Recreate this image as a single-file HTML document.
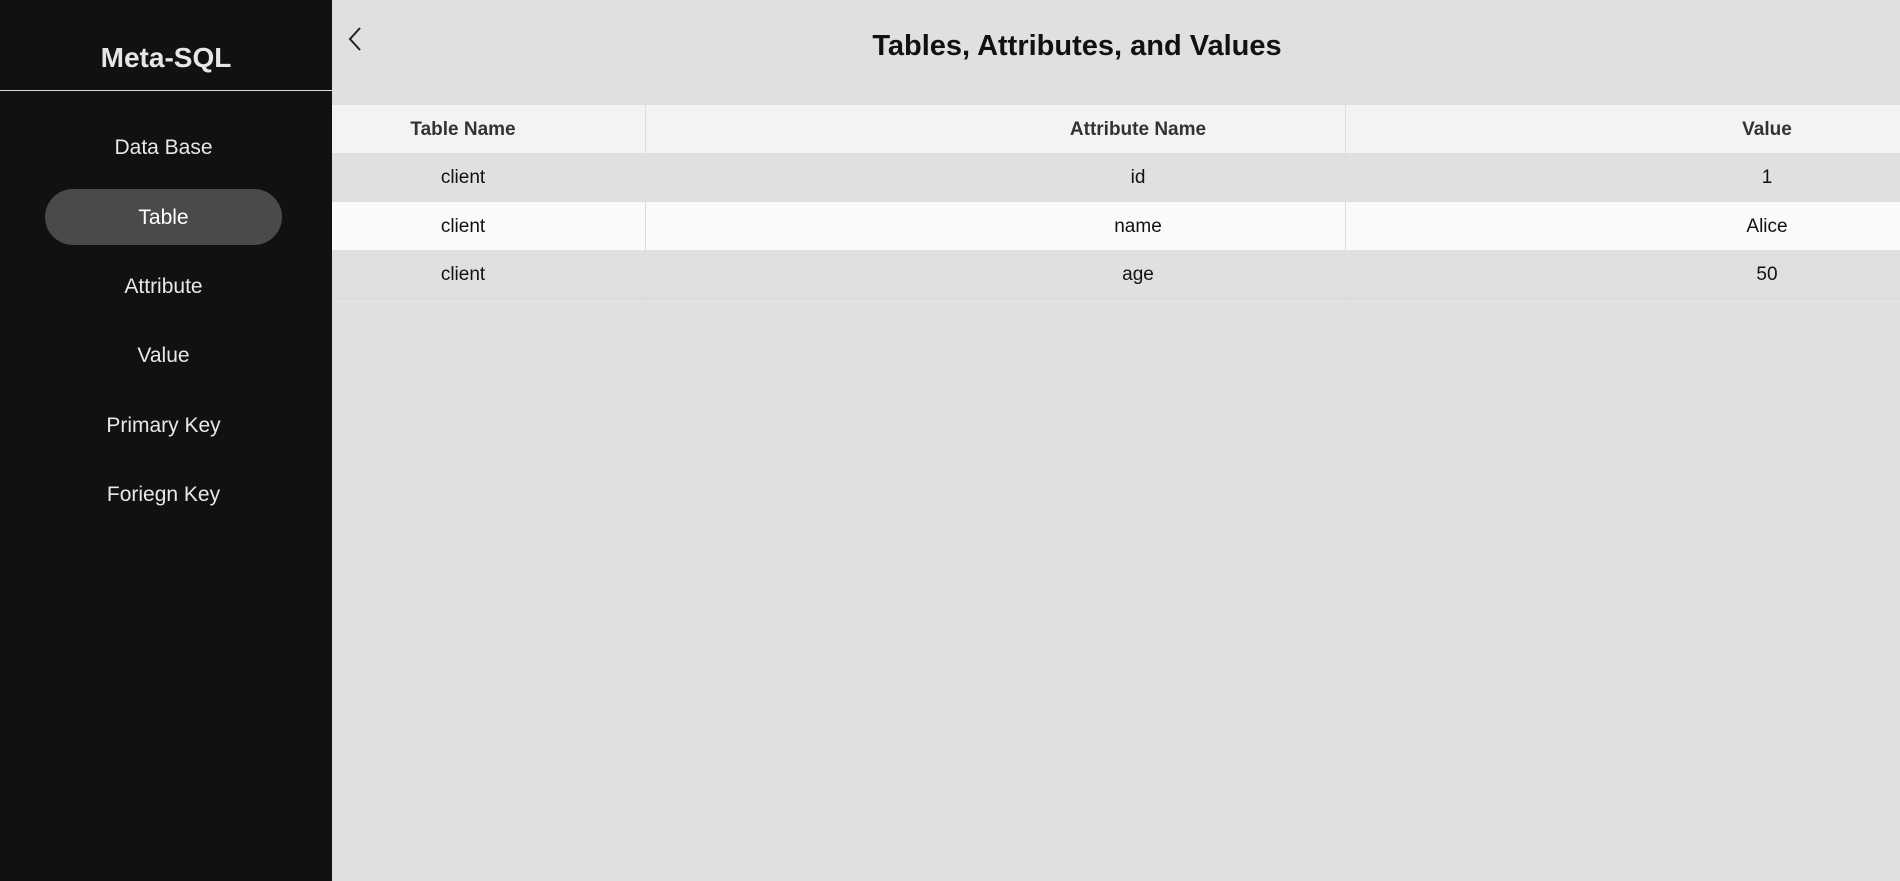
<!DOCTYPE html>
<html><head><style>
body{margin:0;width:1900px;height:881px;background:#e0e0e0;font-family:"Liberation Sans",sans-serif;overflow:hidden;position:relative}
.side{position:absolute;left:0;top:0;width:332px;height:881px;background:#111}
.logo{position:absolute;top:0;left:0;width:332px;height:90px;border-bottom:1px solid #ddd;color:#e6e6e6;font-weight:bold;font-size:28px;text-align:center;line-height:116px}
.nav{position:absolute;left:45px;width:237px;height:56px;line-height:58px;text-align:center;color:#e8e8e8;font-size:21px;border-radius:28px}
.act{background:#4a4a4a;color:#fff}
h1{position:absolute;left:0;width:2154px;top:30px;margin:0;text-align:center;font-size:29px;color:#111}
.row{position:absolute;left:332px;right:0;height:48px;font-size:19px;color:#111}
.row div{position:absolute;top:0;height:100%}
.c1{left:0;width:313px;border-right:1px solid #ddd}
.c2{left:313px;width:700px;border-right:1px solid #ddd}
.row span{position:absolute;top:0;line-height:50px;width:400px;text-align:center;white-space:nowrap}
.t1{left:-69px}.t2{left:606px}.t3{left:1235px}
</style></head><body>
<div class="side">
<div class="logo">Meta-SQL</div>
<div class="nav" style="top:119px">Data Base</div>
<div class="nav act" style="top:189px">Table</div>
<div class="nav" style="top:258px">Attribute</div>
<div class="nav" style="top:327px">Value</div>
<div class="nav" style="top:397px">Primary Key</div>
<div class="nav" style="top:466px">Foriegn Key</div>
</div>
<svg style="position:absolute;left:345px;top:26px" width="20" height="28" viewBox="0 0 20 28"><path d="M15 2 L5 13 L15 24" fill="none" stroke="#222" stroke-width="2"/></svg>
<h1>Tables, Attributes, and Values</h1>
<div class="row" style="top:105px;background:#f3f3f3;font-weight:bold;color:#333"><div class="c1"></div><div class="c2"></div><span class="t1">Table Name</span><span class="t2">Attribute Name</span><span class="t3">Value</span></div>
<div class="row" style="top:153px;background:#e0e0e0"><div class="c1"></div><div class="c2"></div><span class="t1">client</span><span class="t2">id</span><span class="t3">1</span></div>
<div class="row" style="top:202px;background:#fafafa"><div class="c1"></div><div class="c2"></div><span class="t1">client</span><span class="t2">name</span><span class="t3">Alice</span></div>
<div class="row" style="top:250px;background:#e0e0e0;border-bottom:1px solid #d8d8d8"><div class="c1"></div><div class="c2"></div><span class="t1">client</span><span class="t2">age</span><span class="t3">50</span></div>
</body></html>
